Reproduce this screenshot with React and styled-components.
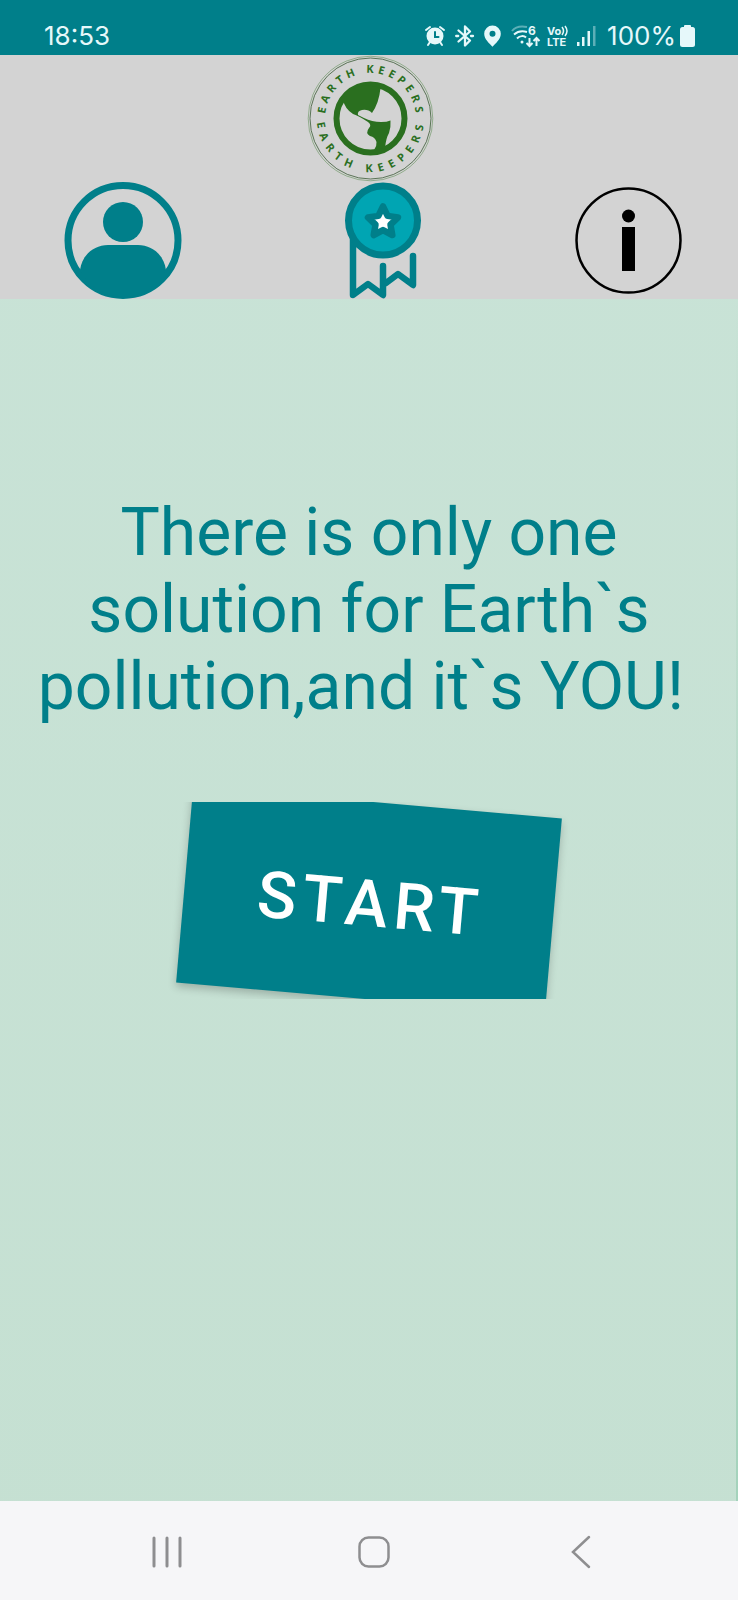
import React from "react";
import styled, { createGlobalStyle } from "styled-components";

const teal = "#007f8a";
const leaf = "#2a6f1f";

const GlobalStyle = createGlobalStyle`
  * { box-sizing: border-box; }
  body { margin: 0; font-family: Roboto, sans-serif; background: #c7e2d5; }
  button { border: 0; padding: 0; margin: 0; background: none; font-family: inherit; cursor: pointer; }
  svg { display: block; overflow: visible; }
`;

const Screen = styled.div`
  min-height: 100vh;
  display: flex;
  flex-direction: column;
  background: linear-gradient(#c9e3d7, #c5e0d2);
`;

const StatusBar = styled.div`
  height: 55px;
  padding: 16px 43px 0 44px;
  display: flex;
  align-items: center;
  justify-content: space-between;
  background: ${teal};
  color: #e6f8fa;
  font-family: Inter, sans-serif;
  font-size: 26px;
  line-height: 40px;
`;

const StatusIcons = styled.div`
  display: flex;
  align-items: center;
  gap: 10px;
`;

const Battery = styled.div`
  display: flex;
  align-items: center;
  gap: 4px;
  margin-left: 1px;
`;

const Header = styled.header`
  background: #d3d3d3;
  display: flex;
  flex-direction: column;
  align-items: center;
`;

const HeaderRow = styled.nav`
  align-self: stretch;
  display: flex;
  justify-content: space-between;
  padding: 0 50px 0 64px;
`;

const Main = styled.main`
  flex: 1;
  display: flex;
  flex-direction: column;
  align-items: center;
  padding-top: 195px;
  background: linear-gradient(rgba(150, 205, 178, 0), rgba(150, 205, 178, 0.7)) right / 2px 100% no-repeat;
`;

const Slogan = styled.h1`
  margin: 0;
  max-width: 680px;
  color: ${teal};
  font-size: 66px;
  font-weight: 400;
  line-height: 77px;
  text-align: center;
`;

const StartFrame = styled.div`
  align-self: stretch;
  margin-top: 77px;
  display: flex;
  justify-content: center;
  overflow: hidden;
`;

const StartButton = styled.button`
  && {
    width: 370px;
    height: 197px;
    padding: 6px 0 0 4px;
    background: ${teal};
    color: #fff;
    font-size: 65px;
    font-weight: 500;
    letter-spacing: 6px;
    transform: rotate(5deg);
    box-shadow: 0 4px 8px rgba(0, 0, 0, 0.22);
  }
`;

const SystemNav = styled.nav`
  height: 99px;
  padding: 2px 54px 0 64px;
  display: grid;
  grid-template-columns: repeat(3, 1fr);
  background: #f6f6f8;
`;

const NavButton = styled.button`
  display: flex;
  align-items: center;
  justify-content: center;
`;

const LogoText = styled.text`
  font-family: "Noto Sans", sans-serif;
  font-size: 11px;
  font-weight: 700;
  letter-spacing: ${(p) => p.$tracking}px;
  fill: ${leaf};
`;

const BadgeText = styled.text`
  font-family: Inter, sans-serif;
  font-size: ${(p) => p.$size}px;
  font-weight: 700;
  fill: currentColor;
`;

function AlarmIcon() {
  return (
    <svg width="20" height="22" viewBox="0 0 20 22" fill="none" stroke="currentColor" strokeWidth="2" strokeLinecap="round">
      <circle cx="10" cy="11" r="8.500" fill="currentColor" stroke="none" />
      <path d="M1 5 5 2M19 5 15 2M5 17 3 20M15 17l2 3" />
      <path d="M10 7v5h3.500" stroke={teal} />
    </svg>
  );
}

function BluetoothIcon() {
  return (
    <svg width="19" height="22" viewBox="0 0 19 22" fill="none" stroke="currentColor" strokeWidth="2.300" strokeLinejoin="round" strokeLinecap="round">
      <path d="M3.500 5.500 15 15.500l-5 5v-19l5 5L3.500 16.500" />
      <path d="M1.200 11h2M16 11h2" />
    </svg>
  );
}

function PinIcon() {
  return (
    <svg width="17" height="22" viewBox="0 0 17 22">
      <path fill="currentColor" fillRule="evenodd" d="M8.500.500A8.300 8.300 0 0 0 .2 8.800c0 5.500 5.300 9.700 8.300 13 3-3.300 8.300-7.500 8.300-13A8.300 8.300 0 0 0 8.500.500Zm0 5.300a3 3 0 1 1 0 6 3 3 0 0 1 0-6Z" />
    </svg>
  );
}

function WifiIcon() {
  return (
    <svg width="26" height="22" viewBox="0 0 26 22" fill="none" stroke="currentColor" strokeWidth="2">
      <path d="M1 6C5 1 11 1 16 2" opacity=".4" />
      <path d="M3 9.500C7 6 11 5.500 16 7M6 13.500c3-3 7-3 9-1" />
      <circle cx="11" cy="17" r="1.500" fill="currentColor" stroke="none" />
      <path d="M18.500 13v8M15.500 18l3 3 3-3M25.500 21v-8M22.500 16l3-3 3 3" />
      <BadgeText $size={12} x="17" y="10" stroke="none">6</BadgeText>
    </svg>
  );
}

function VolteIcon() {
  return (
    <svg width="20" height="24" viewBox="0 0 20 24">
      <BadgeText $size={11} x="0" y="11">Vo</BadgeText>
      <BadgeText $size={11} x="0" y="22">LTE</BadgeText>
      <path d="M15 3q3 4 0 8M18 2q4 5 0 10" fill="none" stroke="currentColor" strokeWidth="1.500" />
    </svg>
  );
}

function SignalIcon() {
  return (
    <svg width="19" height="22" viewBox="0 0 19 22" fill="currentColor">
      <rect x="0" y="17" width="2.500" height="4" />
      <rect x="5" y="12" width="2.500" height="9" />
      <rect x="10.500" y="6" width="2.500" height="15" />
      <rect x="16" y="1" width="2.500" height="20" opacity=".4" />
    </svg>
  );
}

function BatteryIcon() {
  return (
    <svg width="15" height="22" viewBox="0 0 15 22" fill="currentColor">
      <rect x="4" y="0" width="7" height="4" rx="1" />
      <rect x="0" y="2" width="15" height="20" rx="2.500" />
    </svg>
  );
}

function EarthLogo() {
  return (
    <svg width="127" height="127" viewBox="0 0 127 127" role="img" aria-label="Earth Keepers">
      <defs>
        <path id="arcTop" d="M19 63.500a45.500 45.500 0 0 1 91 0" />
        <path id="arcBottom" d="M11 63.500a53.500 53.500 0 0 0 107 0" />
      </defs>
      <circle cx="64.500" cy="63.500" r="62.300" fill="none" stroke={leaf} strokeWidth=".4" />
      <circle cx="64.500" cy="63.500" r="60.500" fill="none" stroke="#3b5c36" strokeWidth=".8" />
      <LogoText $tracking={4} textAnchor="middle"><textPath href="#arcTop" startOffset="51%">EARTH KEEPERS</textPath></LogoText>
      <LogoText $tracking={6} textAnchor="middle"><textPath href="#arcBottom" startOffset="51%">EARTH KEEPERS</textPath></LogoText>
      <circle cx="64.500" cy="63.500" r="34" fill="none" stroke={leaf} strokeWidth="6" />
      <path fill={leaf} d="M37 45Q48 30 62 30L74.500 33Q73 48 66 58Q62 54 56 55Q51 56 52 60L58 63Q66 67 75 67Q81 67 84.500 65.500Q85 72 83 78Q80 83 79 93L68 95Q71 91 70.500 87Q69 82 64 81Q59 78 63 73Q66 70 62 67Q53 61 47 59Q39 54 37 45Z" />
    </svg>
  );
}

function ProfileIcon() {
  return (
    <svg width="118" height="117" viewBox="0 0 118 117">
      <circle cx="59" cy="58.500" r="55" fill="none" stroke={teal} strokeWidth="7" />
      <circle cx="59" cy="40" r="20" fill={teal} />
      <path fill={teal} d="M16 88C18 73 30 63 44 63h30c14 0 26 10 28 25A48 48 0 0 1 16 88Z" />
    </svg>
  );
}

function MedalIcon() {
  return (
    <svg width="118" height="117" viewBox="0 0 118 117" fill="none" strokeLinejoin="round" strokeLinecap="round">
      <path d="M36 54v59l15-11 15 11V84M69 101l12-9 15 11V74" stroke={teal} strokeWidth="6.500" />
      <circle cx="66" cy="38.500" r="34.500" fill="#00a5b3" stroke={teal} strokeWidth="7" />
      <path d="m66 24.500 4.600 9.400 10.400 1.500-7.500 7.300 1.800 10.300L66 48.100l-9.300 4.900 1.800-10.300L51 35.400l10.400-1.500Z" fill="#fff" stroke={teal} strokeWidth="6.500" />
    </svg>
  );
}

function InfoIcon() {
  return (
    <svg width="118" height="117" viewBox="0 0 118 117">
      <circle cx="58.500" cy="58.500" r="52" fill="none" stroke="#000" strokeWidth="2.500" />
      <circle cx="58.500" cy="34" r="6.500" />
      <rect x="52" y="45" width="13" height="44" />
    </svg>
  );
}

export default function App() {
  return (
    <Screen>
      <GlobalStyle />
      <StatusBar>
        <span>18:53</span>
        <StatusIcons>
          <AlarmIcon />
          <BluetoothIcon />
          <PinIcon />
          <WifiIcon />
          <VolteIcon />
          <SignalIcon />
          <Battery>
            <span>100%</span>
            <BatteryIcon />
          </Battery>
        </StatusIcons>
      </StatusBar>
      <Header>
        <EarthLogo />
        <HeaderRow>
          <button aria-label="Profile"><ProfileIcon /></button>
          <button aria-label="Achievements"><MedalIcon /></button>
          <button aria-label="Information"><InfoIcon /></button>
        </HeaderRow>
      </Header>
      <Main>
        <Slogan>There is only one solution for Earth`s pollution,and it`s YOU!&nbsp;</Slogan>
        <StartFrame>
          <StartButton>START</StartButton>
        </StartFrame>
      </Main>
      <SystemNav>
        <NavButton aria-label="Recent apps">
          <svg width="32" height="32" viewBox="0 0 32 32" stroke="#8e8e90" strokeWidth="3" strokeLinecap="round">
            <path d="M3 2v28M16 2v28M29 2v28" />
          </svg>
        </NavButton>
        <NavButton aria-label="Home">
          <svg width="32" height="32" viewBox="0 0 32 32" fill="none" stroke="#8e8e90" strokeWidth="2.500">
            <rect x="1.500" y="1.500" width="29" height="29" rx="9" />
          </svg>
        </NavButton>
        <NavButton aria-label="Back">
          <svg width="32" height="32" viewBox="0 0 32 32" fill="none" stroke="#8e8e90" strokeWidth="2.500" strokeLinecap="round">
            <path d="M24 1 8 16l16 15" />
          </svg>
        </NavButton>
      </SystemNav>
    </Screen>
  );
}
